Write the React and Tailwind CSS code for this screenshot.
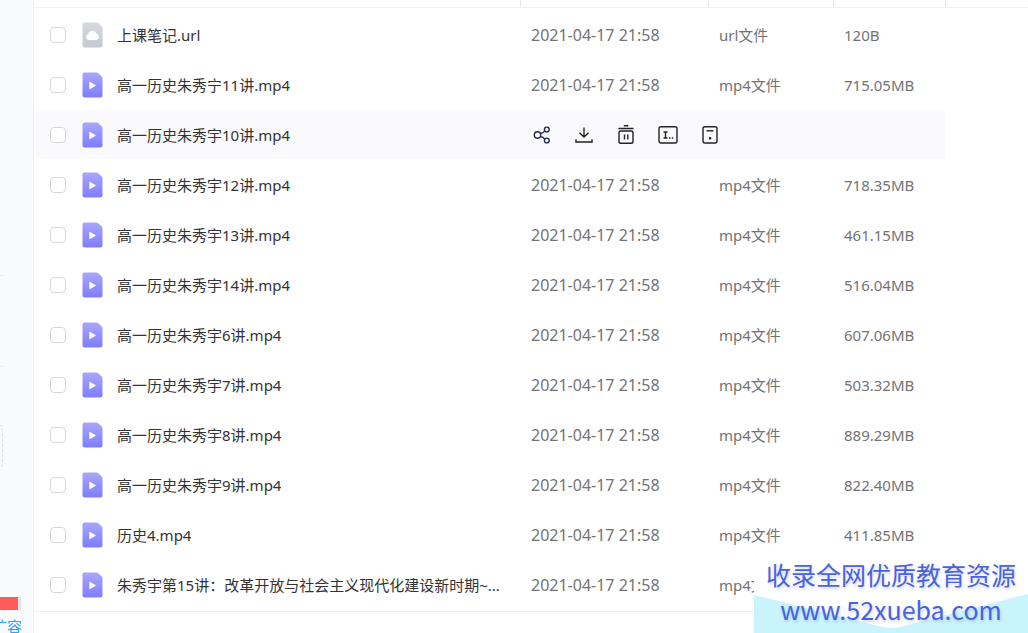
import React from "react";

const DATE = "2021-04-17 21:58";

const files = [
  { name: "上课笔记.url", type: "url文件", size: "120B", kind: "cloud" },
  { name: "高一历史朱秀宁11讲.mp4", type: "mp4文件", size: "715.05MB" },
  { name: "高一历史朱秀宇10讲.mp4", active: true },
  { name: "高一历史朱秀宇12讲.mp4", type: "mp4文件", size: "718.35MB" },
  { name: "高一历史朱秀宇13讲.mp4", type: "mp4文件", size: "461.15MB" },
  { name: "高一历史朱秀宇14讲.mp4", type: "mp4文件", size: "516.04MB" },
  { name: "高一历史朱秀宇6讲.mp4", type: "mp4文件", size: "607.06MB" },
  { name: "高一历史朱秀宇7讲.mp4", type: "mp4文件", size: "503.32MB" },
  { name: "高一历史朱秀宇8讲.mp4", type: "mp4文件", size: "889.29MB" },
  { name: "高一历史朱秀宇9讲.mp4", type: "mp4文件", size: "822.40MB" },
  { name: "历史4.mp4", type: "mp4文件", size: "411.85MB" },
  { name: "朱秀宇第15讲：改革开放与社会主义现代化建设新时期~...", type: "mp4文件", size: "" },
];

function FileIcon({ kind }) {
  const cloud = kind === "cloud";
  return (
    <svg className="h-[26px] w-[21px] shrink-0" viewBox="0 0 21 26" aria-hidden="true">
      <defs>
        <linearGradient id="videoFill" x1="0" y1="0" x2="0" y2="1">
          <stop offset="0" stopColor="#a9a6fb" />
          <stop offset="1" stopColor="#7f7dfa" />
        </linearGradient>
        <linearGradient id="cloudFill" x1="0" y1="0" x2="0" y2="1">
          <stop offset="0" stopColor="#d6d8dd" />
          <stop offset="1" stopColor="#c6c9cf" />
        </linearGradient>
      </defs>
      <path
        d="M2.5 .5H14.2Q15.4 .5 16.2 1.2L19.7 4.4Q20.5 5.2 20.5 6.4V23.5Q20.5 25.5 18.5 25.5H2.5Q.5 25.5 .5 23.5V2.5Q.5 .5 2.5 .5Z"
        fill={cloud ? "url(#cloudFill)" : "url(#videoFill)"}
      />
      {cloud ? (
        <path d="M6.6 18A3.2 3.2 0 0 1 6.4 11.8A4.2 4.2 0 0 1 14.4 11.4A3.4 3.4 0 0 1 14.4 18Z" fill="#fff" />
      ) : (
        <path d="M7.3 10.4Q7.3 9.6 8.1 10L13.4 13Q14 13.5 13.4 14L8.1 17Q7.3 17.4 7.3 16.6Z" fill="#fff" />
      )}
    </svg>
  );
}

const actions = [
  {
    label: "分享",
    color: "#252b45",
    art: (
      <>
        <circle cx="5.5" cy="10" r="3.2" />
        <circle cx="14.8" cy="4.5" r="2.4" />
        <circle cx="14.8" cy="15.5" r="2.4" />
        <path d="M8.2 8.5Q11.5 8.2 12.7 6M8.2 11.5Q11.5 11.8 12.7 14" />
      </>
    ),
  },
  {
    label: "下载",
    color: "#222",
    art: <path d="M10 2.5V12M5.5 7.7L10 12.1L14.5 7.7M2 14.2V17H18V14.2" />,
  },
  {
    label: "删除",
    color: "#222",
    art: (
      <>
        <path d="M7.8 .8H12.2M2.5 3.5H17.5M8.5 9.5V14.5M11.8 9.5V14.5" />
        <rect x="3" y="6" width="14" height="12.3" rx="1.8" />
      </>
    ),
  },
  {
    label: "重命名",
    color: "#222",
    art: (
      <>
        <rect x="1" y="1.8" width="18" height="16.2" rx="2" />
        <path d="M5.5 7H9.5M7.5 7V13M5.5 13H9.5M11 13H12.4M13.8 13H15.2" />
      </>
    ),
  },
  {
    label: "移动",
    color: "#222",
    art: (
      <>
        <rect x="3" y="1.8" width="14" height="16.2" rx="2" />
        <path d="M6.5 5.8H13.5" />
        <rect x="9.6" y="12.8" width=".9" height=".9" />
      </>
    ),
  },
];

function Actions() {
  return (
    <div className="flex gap-[22px]">
      {actions.map((a) => (
        <button key={a.label} type="button" aria-label={a.label} className="block size-5">
          <svg viewBox="0 0 20 20" className="size-5" fill="none" stroke={a.color} strokeWidth="1.4">
            {a.art}
          </svg>
        </button>
      ))}
    </div>
  );
}

function FileRow({ file }) {
  const hover = file.active ? "bg-[#fafafc]" : "";
  return (
    <tr className="h-[50px] text-[#737373]">
      <td className="p-0 pb-[2px]">
        <div className={`flex h-12 items-center pl-[14px] ${hover}`}>
          <input
            type="checkbox"
            aria-label={file.name}
            className="size-4 shrink-0 appearance-none rounded border border-[#d4d7dc] bg-white checked:bg-[#06a7ff]"
          />
          <div className="ml-4 flex min-w-0 items-center gap-[14px]">
            <FileIcon kind={file.kind} />
            <a href="#file" className="truncate text-[#333]">{file.name}</a>
          </div>
        </div>
      </td>
      {file.active ? (
        <td colSpan={3} className="p-0 pb-[2px]">
          <div className={`flex h-12 items-center pl-[11px] ${hover}`}>
            <Actions />
          </div>
        </td>
      ) : (
        <>
          <td className="p-0 pb-[2px] pl-[10px] text-[16px] whitespace-nowrap">{DATE}</td>
          <td className="p-0 pb-[2px] pl-[10px] whitespace-nowrap">{file.type}</td>
          <td className="p-0 pb-[2px] pl-[10px] whitespace-nowrap">{file.size}</td>
        </>
      )}
    </tr>
  );
}

function Sidebar() {
  return (
    <aside className="flex w-[34px] shrink-0 flex-col justify-end overflow-hidden border-r border-[#f0f1f4] bg-[#f8fafd]">
      <div className="h-px w-[3px] bg-[#e9ebee]" />
      <div className="mt-[90px] h-px w-[3px] bg-[#e9ebee]" />
      <div className="mt-[58px] h-[42px] w-[3px] rounded-r border border-l-0 border-dashed border-[#dcdfe4]" />
      <div className="mt-[130px] h-[13px] w-[21px] bg-[#e3e4e6]">
        <div className="h-[13px] w-[18px] bg-[#ff5a5c]" />
      </div>
      <a href="#expand" className="mt-[5px] flex h-[18px] w-[22px] justify-end text-[15px] leading-[22px] whitespace-nowrap text-[#2ba5f7]">
        扩容
      </a>
    </aside>
  );
}

function Banner() {
  return (
    <div className="absolute right-0 bottom-0 h-[76px] w-[274px] bg-white text-center font-['Noto_Sans_CJK_SC',sans-serif] text-[25px] text-[#4763e0]">
      <svg className="absolute inset-0 size-full" viewBox="0 0 274 76" preserveAspectRatio="none" aria-hidden="true">
        <path d="M0 38L120 68Q137 74 154 68L274 37V76H0Z" fill="#c9f4fe" />
      </svg>
      <div className="relative [text-shadow:1px_2px_3px_rgba(110,120,170,0.3)]">
        <p className="leading-[34px]">收录全网优质教育资源</p>
        <a href="#site" className="block leading-[36px]">www.52xueba.com</a>
      </div>
    </div>
  );
}

export default function App() {
  return (
    <div className="relative flex min-h-screen overflow-hidden bg-white font-['Noto_Sans','Noto_Sans_CJK_SC',sans-serif] text-[15px]">
      <Sidebar />
      <main className="min-w-0 flex-1">
        <div className="flex h-2 border-b border-[#f0f1f3] pr-[82px]">
          <div className="flex-1 border-r border-[#e6e7ea]" />
          <div className="w-[188px] border-r border-[#e6e7ea]" />
          <div className="w-[125px] border-r border-[#e6e7ea]" />
          <div className="w-[112px] border-r border-[#e6e7ea]" />
        </div>
        <div className="border-b border-[#f0f1f3] pt-[3px] pr-[83px] pl-[2px]">
          <table className="w-full table-fixed border-collapse">
            <colgroup>
              <col />
              <col className="w-[188px]" />
              <col className="w-[125px]" />
              <col className="w-[111px]" />
            </colgroup>
            <tbody>
              {files.map((f) => (
                <FileRow key={f.name} file={f} />
              ))}
            </tbody>
          </table>
        </div>
      </main>
      <Banner />
    </div>
  );
}
